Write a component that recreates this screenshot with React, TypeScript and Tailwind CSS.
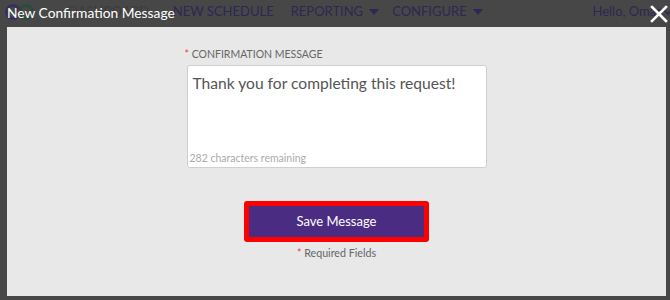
import React from 'react';

const font = { fontFamily: 'Lato, "Open Sans", sans-serif' };

export default function App() {
  return (
    <div className="relative h-[300px] w-[670px] overflow-hidden bg-[#474747]" style={font}>
      {/* page underneath the overlay */}
      <div className="flex h-[23px] items-center text-[13px] text-[#2c2852]">
        <div className="ml-[5px] flex">
          <span className="h-[16px] w-[16px] rounded-full border-[3px] border-[#3a2f5a]" />
          <span className="-ml-[3px] h-[16px] w-[16px] rounded-full border-[3px] border-[#2d4a3e]" />
        </div>
        <span className="ml-[34px] text-[#3c3c3c]">DASHBOARD</span>
        <span className="ml-[24px]">NEW SCHEDULE</span>
        <span className="ml-[17px] flex items-center gap-[6px]">
          REPORTING <Caret />
        </span>
        <span className="ml-[13px] flex items-center gap-[6px]">
          CONFIGURE <Caret />
        </span>
        <span className="ml-auto -mr-[3px] flex items-center gap-[2px]">
          Hello, Omar
          <svg width="10" height="10" viewBox="0 0 10 10" fill="none" stroke="currentColor" strokeWidth="1.5">
            <path d="M1 3l4 4 4-4" />
          </svg>
        </span>
      </div>

      {/* modal */}
      <div className="absolute left-[7px] right-[4px] top-0 bottom-[4px] flex flex-col">
        <div className="flex h-[27px] items-center justify-between">
          <span className="text-[13.8px] text-white">New Confirmation Message</span>
          <svg className="mr-[-2px]" width="18" height="18" viewBox="0 0 18 18" stroke="white" strokeWidth="2.6" strokeLinecap="square">
            <path d="M2 2l14 14M16 2L2 16" />
          </svg>
        </div>
        <div className="flex flex-1 flex-col items-center bg-[#e8e8e8] pt-[21px]">
          <div className="w-[300px]">
            <div className="ml-[-2px] mb-[4px] text-[10.5px] leading-[13px] text-[#666]">
              <span className="text-[#e2483d]">* </span>CONFIRMATION MESSAGE
            </div>
            <div className="flex h-[103px] flex-col justify-between rounded-[3px] border border-[#cfcfcf] bg-white px-[5px] pt-[6px] pb-[2px]">
              <div className="text-[15.6px] leading-[22px] text-[#555]">Thank you for completing this request!</div>
              <div className="-ml-[3px] text-[10.5px] leading-[14px] text-[#aaa]">282 characters remaining</div>
            </div>
          </div>
          <div className="mt-[33px] rounded-[3px] bg-[#ff0000] p-[5px]">
            <div className="flex h-[31px] w-[175px] items-center justify-center bg-[#4b2c83] text-[13px] text-white">
              Save Message
            </div>
          </div>
          <div className="mt-[4px] text-[10.7px] leading-[13px] text-[#666]">
            <span className="text-[#e2483d]">* </span>Required Fields
          </div>
        </div>
      </div>
    </div>
  );
}

function Caret() {
  return (
    <svg width="10" height="6" viewBox="0 0 10 6" fill="currentColor">
      <path d="M0 0h10L5 6z" />
    </svg>
  );
}
